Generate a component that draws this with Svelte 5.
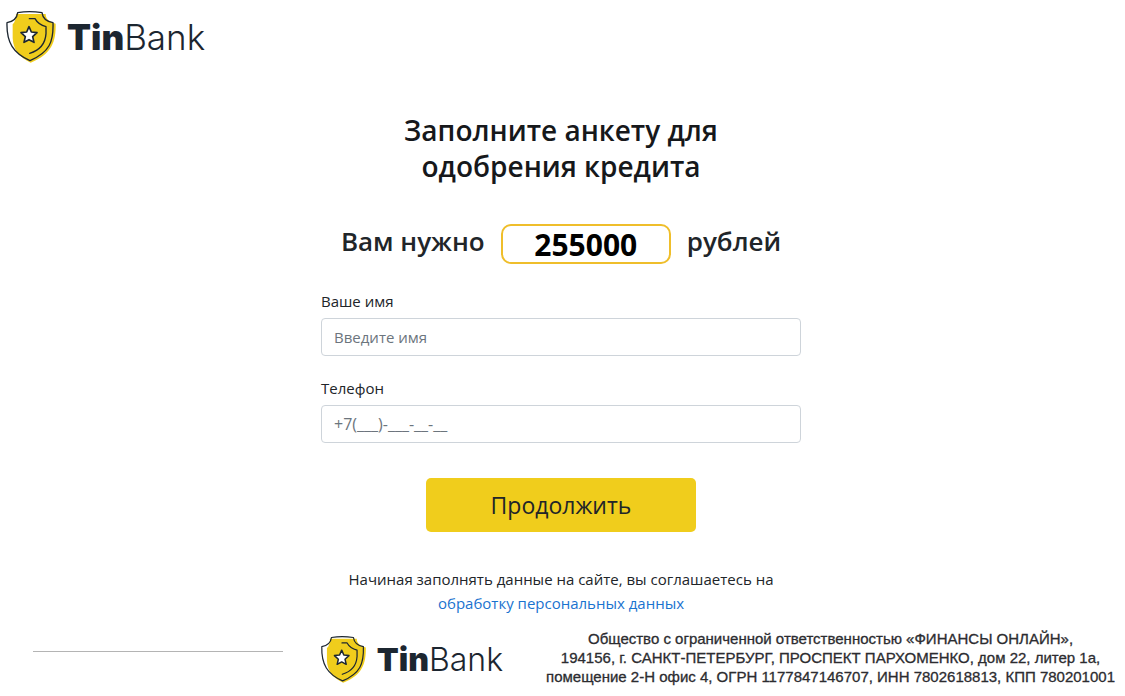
<script>
  let amount = $state('255000');
  let name = $state('');
  let phone = $state('');
</script>

{#snippet logo()}
  <svg class="shield" viewBox="15 30 156 162" aria-hidden="true">
    <path fill="#f0cd1c" d="M48 42H137C137 55 145 65 167 71C168 125 156 162 92 188C58 172 40 150 38 115V73C44 68 48 57 48 42Z" />
    <g fill="none" stroke="#1c2630" stroke-width="4" stroke-linejoin="round" stroke-linecap="round">
      <path d="M53 38Q88 32 126 38C128 53 139 65 159 68C161 126 148 157 90 182C40 160 19 128 21 68C40 65 51 54 53 38Z" />
      <path d="M88 56H105C111 67 119 75 138 80V101C136 131 119 151 89 160" />
      <path fill="#fff" stroke-width="5" d="M87 80L94 96L111 98L98 110L102 127L87 119L72 127L76 110L63 98L80 96Z" />
    </g>
  </svg>
  <span class="wordmark"><b>Tin</b>Bank</span>
{/snippet}

<div class="page">
  <header>
    <a class="logo" href="#top">{@render logo()}</a>
  </header>

  <main>
    <h1>Заполните анкету для<br />одобрения кредита</h1>
    <form onsubmit={(e) => e.preventDefault()}>
      <div class="amount">
        <label for="amount">Вам нужно</label>
        <input id="amount" inputmode="numeric" bind:value={amount} />
        <span>рублей</span>
      </div>
      <div class="field">
        <label for="name">Ваше имя</label>
        <input id="name" placeholder="Введите имя" bind:value={name} />
      </div>
      <div class="field">
        <label for="phone">Телефон</label>
        <input id="phone" type="tel" placeholder="+7(___)-___-__-__" bind:value={phone} />
      </div>
      <button type="submit">Продолжить</button>
    </form>
    <p class="consent">
      Начиная заполнять данные на сайте, вы соглашаетесь на<br />
      <a href="#privacy">обработку персональных данных</a>
    </p>
  </main>

  <footer>
    <hr />
    <a class="logo small" href="#top">{@render logo()}</a>
    <p>
      Общество с ограниченной ответственностью «ФИНАНСЫ ОНЛАЙН»,<br />
      194156, г. САНКТ-ПЕТЕРБУРГ, ПРОСПЕКТ ПАРХОМЕНКО, дом 22, литер 1а,<br />
      помещение 2-Н офис 4, ОГРН 1177847146707, ИНН 7802618813, КПП 780201001
    </p>
  </footer>
</div>

<style>
  :global(body) {
    margin: 0;
    background: #fff;
  }
  .page {
    font: 15px/24px 'Open Sans', 'Noto Sans', sans-serif;
    color: #212529;
  }
  .page :global(*) {
    box-sizing: border-box;
  }
  header {
    display: flex;
    padding: 10px 5px;
  }
  .logo {
    display: flex;
    align-items: center;
    gap: 10px;
    color: #1c2630;
    text-decoration: none;
  }
  .shield {
    width: 52px;
    height: 54px;
    flex: none;
  }
  .wordmark {
    font: 300 35px/40px Inter, sans-serif;
    white-space: nowrap;
  }
  .wordmark b {
    font-weight: 900;
  }
  main {
    max-width: 483px;
    margin: 0 auto;
    padding: 38px 3px 0 0;
  }
  h1 {
    margin: 0;
    text-align: center;
    font-weight: 600;
    font-size: 28px;
    line-height: 36px;
    color: #16181b;
  }
  .amount {
    display: flex;
    align-items: flex-start;
    justify-content: center;
    gap: 16px;
    margin: 40px 0 25px;
    font-weight: 600;
    font-size: 26px;
    line-height: 34px;
    white-space: nowrap;
  }
  .amount input {
    width: 170px;
    height: 40px;
    padding: 0;
    border: 2px solid #efbe2b;
    border-radius: 10px;
    background: #fff;
    color: #000;
    font: inherit;
    font-size: 30px;
    font-weight: 700;
    text-align: center;
  }
  .field {
    display: flex;
    flex-direction: column;
    gap: 5px;
    margin-bottom: 20px;
  }
  .field input {
    width: 100%;
    height: 38px;
    padding: 6px 12px;
    border: 1px solid #ced4da;
    border-radius: 4px;
    background: #fff;
    color: #495057;
    font: inherit;
  }
  .field input::placeholder {
    color: #6c757d;
    opacity: 1;
  }
  #phone::placeholder {
    font-size: 16px;
  }
  button {
    display: block;
    width: 270px;
    height: 54px;
    margin: 35px auto 0;
    padding: 0;
    border: 0;
    border-radius: 5px;
    background: #f0cd1c;
    color: #212529;
    font: inherit;
    font-size: 23px;
    cursor: pointer;
  }
  .consent {
    margin: 35px 0 0;
    text-align: center;
  }
  .consent a {
    color: #1a73cf;
    text-decoration: none;
  }
  footer {
    display: flex;
    align-items: center;
    padding: 14px 10px 8px 33px;
  }
  hr {
    flex: 1;
    align-self: flex-start;
    max-width: 250px;
    margin: 22px auto 0 0;
    border: 0;
    border-top: 1px solid #b4b4b4;
  }
  .small {
    margin: 4px 43px 0 36px;
  }
  .small .shield {
    width: 47px;
    height: 49px;
  }
  .small .wordmark {
    font-size: 32px;
  }
  footer p {
    margin: 0;
    font: 15px/19px 'Liberation Sans', Arial, sans-serif;
    color: #2c2c30;
    text-align: center;
    white-space: nowrap;
    -webkit-text-stroke: 0.3px #2c2c30;
  }
</style>
